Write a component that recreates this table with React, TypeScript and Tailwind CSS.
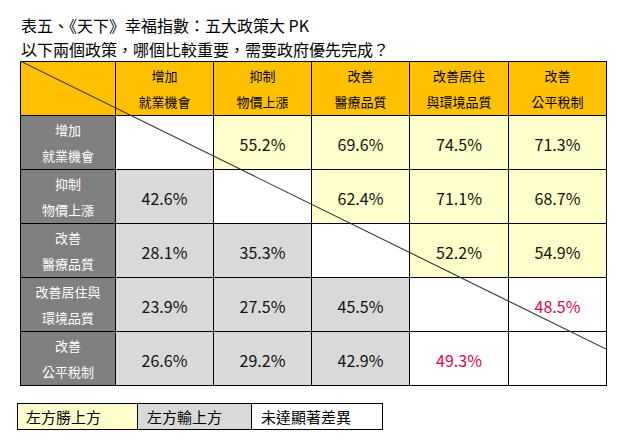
const FONT = "font-['Noto_Sans_CJK_TC','Liberation_Sans',sans-serif]";

type Cell = { v?: string; bg: "y" | "g" | "w"; red?: boolean };

const heads = [
  ["增加", "就業機會"],
  ["抑制", "物價上漲"],
  ["改善", "醫療品質"],
  ["改善居住", "與環境品質"],
  ["改善", "公平稅制"],
];

const rowHeads = [
  ["增加", "就業機會"],
  ["抑制", "物價上漲"],
  ["改善", "醫療品質"],
  ["改善居住與", "環境品質"],
  ["改善", "公平稅制"],
];

const rows: Cell[][] = [
  [{ bg: "w" }, { v: "55.2%", bg: "y" }, { v: "69.6%", bg: "y" }, { v: "74.5%", bg: "y" }, { v: "71.3%", bg: "y" }],
  [{ v: "42.6%", bg: "g" }, { bg: "w" }, { v: "62.4%", bg: "y" }, { v: "71.1%", bg: "y" }, { v: "68.7%", bg: "y" }],
  [{ v: "28.1%", bg: "g" }, { v: "35.3%", bg: "g" }, { bg: "w" }, { v: "52.2%", bg: "y" }, { v: "54.9%", bg: "y" }],
  [{ v: "23.9%", bg: "g" }, { v: "27.5%", bg: "g" }, { v: "45.5%", bg: "g" }, { bg: "w" }, { v: "48.5%", bg: "w", red: true }],
  [{ v: "26.6%", bg: "g" }, { v: "29.2%", bg: "g" }, { v: "42.9%", bg: "g" }, { v: "49.3%", bg: "w", red: true }, { bg: "w" }],
];

const bgClass = { y: "bg-[#ffffcc]", g: "bg-[#d9d9d9]", w: "bg-white" };

export default function App() {
  return (
    <div className={`${FONT} w-[625px] h-[440px] bg-white px-[20px] pt-[12px] text-black`}>
      <div className="ml-[1px] text-[16px] leading-[26px]">表五、《天下》幸福指數：五大政策大 PK</div>
      <div className="ml-[1px] text-[16px] leading-[23px]">以下兩個政策，哪個比較重要，需要政府優先完成？</div>

      <div className="relative w-[586px]">
        <table className="w-[586px] table-fixed border-collapse">
          <colgroup>
            <col className="w-[95px]" />
            <col className="w-[98px]" />
            <col className="w-[98px]" />
            <col className="w-[98px]" />
            <col className="w-[99px]" />
            <col className="w-[98px]" />
          </colgroup>
          <thead>
            <tr className="h-[54px] bg-[#ffc000]">
              <th className="border border-black" />
              {heads.map((h, i) => (
                <th key={i} className="border border-black text-center text-[13px] font-normal leading-[26px]">
                  <div>{h[0]}</div>
                  <div>{h[1]}</div>
                </th>
              ))}
            </tr>
          </thead>
          <tbody>
            {rows.map((r, ri) => (
              <tr key={ri} className="h-[54px]">
                <th className="border border-black bg-[#808080] text-center text-[13px] font-normal leading-[26px] text-white">
                  <div>{rowHeads[ri][0]}</div>
                  <div>{rowHeads[ri][1]}</div>
                </th>
                {r.map((c, ci) => (
                  <td
                    key={ci}
                    className={`border border-black pt-[3px] text-center text-[16px] ${bgClass[c.bg]} ${
                      c.red ? "text-[#e3004f]" : "text-[#111]"
                    }`}
                  >
                    {c.v}
                  </td>
                ))}
              </tr>
            ))}
          </tbody>
        </table>
        {/* diagonal across the matrix */}
        <svg className="pointer-events-none absolute left-0 top-0" width="586" height="324" viewBox="0 0 586 324">
          <line x1="0" y1="0" x2="586" y2="288" stroke="#333" strokeWidth="1.1" />
        </svg>
      </div>

      <div className="mt-[17px] -ml-[3px] flex h-[27px] w-[366px] border border-black text-[15px] leading-[25px]">
        <div className="w-[120px] border-r border-black bg-[#ffffcc] pl-[8px]">左方勝上方</div>
        <div className="w-[114px] border-r border-black bg-[#d9d9d9] pl-[9px]">左方輸上方</div>
        <div className="flex-1 bg-white pl-[9px]">未達顯著差異</div>
      </div>
    </div>
  );
}
